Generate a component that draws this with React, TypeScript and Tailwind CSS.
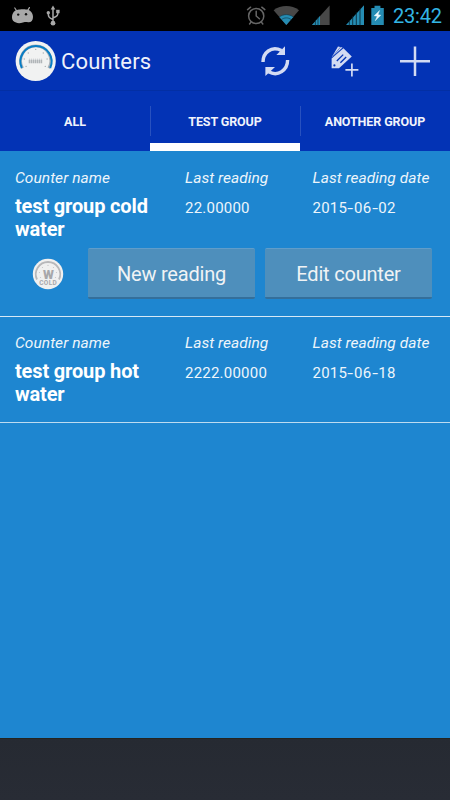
import React from "react";

function StatusBar() {
  return (
    <div className="flex h-[31px] shrink-0 items-start bg-black">
      <svg className="h-[31px] w-[230px] shrink-0" viewBox="0 0 230 31">
        <g fill="#a8a8a8">
          <path d="M12 17.5C12 12.5 15 9.7 18 9.7C20 9 24.5 9 26.5 9.6C30.5 10.2 33 13 33 17C33 20.5 31 22.6 28 22.3C26.5 22 25.5 21.9 23 22.6C20 23.5 17.5 23.4 16 22.5C13.5 22 12 20 12 17.5Z" />
          <path d="M16.8 11L14.8 8M27.6 10.6L29.4 7.6" stroke="#a8a8a8" strokeWidth="1.2" strokeLinecap="round" />
        </g>
        <circle cx="18.2" cy="14.6" r="1.2" fill="#111" />
        <circle cx="26" cy="14.3" r="1.2" fill="#111" />
        <g fill="none" stroke="#a8a8a8" strokeWidth="1.5">
          <path d="M53 8V22M53 19.5C48.5 17.5 48.3 16.5 48.3 13M53 18C57.6 16 58 15.5 58 11.5" />
        </g>
        <g fill="#a8a8a8">
          <path d="M53 5.6L55.3 9.4H50.7Z" />
          <circle cx="53" cy="23.2" r="2.4" />
          <circle cx="48.3" cy="12.7" r="1.7" />
          <rect x="56.2" y="9.8" width="3.4" height="3.4" />
        </g>
      </svg>
      <svg className="ml-[10px] h-[31px] w-[148px] shrink-0" viewBox="240 0 148 31">
        <g fill="none" stroke="#666" strokeWidth="1.5" strokeLinecap="round">
          <circle cx="256.2" cy="16" r="7.6" />
          <path d="M256.2 11.2V16L259.4 18.8M247.6 9.6L250.6 7.2M264.8 9.6L261.8 7.2M250.8 22.4L249.6 24M261.6 22.4L262.8 24" />
        </g>
        <path d="M286.3 25L273.6 10.2C281 4.6 291.6 4.6 299 10.2Z" fill="#484848" />
        <path d="M286.3 25L279.3 16.9C283.4 13.9 289.2 13.9 293.3 16.9Z" fill="#258cb3" />
        <path d="M279.2 17C283.4 13.8 289.2 13.8 293.4 17M281.4 19.6C284.4 17.3 288.2 17.3 291.2 19.6" fill="none" stroke="#123f51" strokeWidth=".7" />
        <path d="M312 25L329.6 5.5V25Z" fill="#484848" />
        <path d="M312 25L320 16.1V25Z" fill="#258cb3" />
        <path d="M315.4 20V25.5M318 17.5V25.5" stroke="#082632" strokeWidth=".7" />
        <path d="M346 25L364 5.2V25Z" fill="#258cb3" />
        <path d="M349.3 20V25.5M352.7 16V25.5M356.3 12V25.5M360 8V25.5" stroke="#06202b" strokeWidth=".8" />
        <path d="M371.3 8H374.5V5.7H380.4V8H383.8V25H371.3Z" fill="#258cb3" />
        <path d="M379.6 10.5L374.2 15.8L377.2 16.3L375.2 20.8L380.8 15.2L378 14.6Z" fill="#eef8fc" stroke="#eef8fc" strokeWidth=".4" />
      </svg>
      <span className="ml-[5px] text-[20px] leading-[32px] font-normal text-[#33b5e5] tracking-[-0.2px]">23:42</span>
    </div>
  );
}

function AppLogo() {
  return (
    <svg className="h-[42px] w-[42px] shrink-0" viewBox="0 0 42 42">
      <circle cx="21.7" cy="21" r="20.1" fill="#f1f2f2" />
      <path d="M8.6 28.2A15 15 0 1 1 34.8 28.2" fill="none" stroke="#a8b2ba" strokeWidth="2.8" />
      <path d="M7.8 28A15.6 15.6 0 1 1 36.2 28" fill="none" stroke="#087dc5" strokeWidth="2" />
      <g fill="#aab0b4">
        <circle cx="21.7" cy="9.4" r=".7" /><circle cx="14.3" cy="13" r=".7" /><circle cx="29.3" cy="13" r=".7" />
        <circle cx="10.3" cy="19" r=".7" /><circle cx="33.1" cy="19" r=".7" />
        <circle cx="12.1" cy="26.4" r=".7" /><circle cx="31.3" cy="26.4" r=".7" />
      </g>
      <path d="M14.7 21.5H28.7" stroke="#b0b5b8" strokeWidth="3.4" strokeDasharray="1.5 .5" />
      <path d="M15.1 19.2H28.3" stroke="#c3c7ca" strokeWidth="1" strokeDasharray="1 1" />
    </svg>
  );
}

function ActionBar() {
  return (
    <header className="flex h-[60px] shrink-0 items-center border-b border-[#032fa4] bg-[#0333b5] pl-[14px]">
      <AppLogo />
      <h1 className="ml-[5px] w-[179px] pt-[2px] text-[22px] leading-[30px] font-normal tracking-[0.2px] text-[#eef1fb]">Counters</h1>
      <svg className="h-[60px] w-[210px] shrink-0" viewBox="240 31 210 60">
        <g fill="none" stroke="#d3dbf3" strokeWidth="3.4">
          <path d="M263 62C263 53 271 45.5 281.5 50.5" />
          <path d="M287.6 60C287.6 70 278 77 268.7 71.8" />
        </g>
        <path d="M285 46.2V55H276.4Z" fill="#d3dbf3" />
        <path d="M265.4 67H275L265.4 76Z" fill="#d3dbf3" />
        <g fill="#d3dbf3">
          <path d="M331.6 58.6L343.4 48.2L351.8 56.6L339 68.2H331.6Z" />
          <path d="M331.6 57.4L338 46.4L342.6 47.4Z" />
        </g>
        <path d="M332.6 56.6L340.6 47" stroke="#0333b5" strokeWidth=".5" />
        <path d="M336.8 61L343.2 54.6M340.4 62.8L346.2 57" stroke="#0333b5" strokeWidth="1.3" />
        <circle cx="334.4" cy="65.4" r="1.1" fill="#0333b5" />
        <path d="M351.9 63.4V76.4M345.4 69.9H358.4" stroke="#d3dbf3" strokeWidth="1.7" />
        <path d="M415 46.5V76M400 61.3H430" stroke="#d3dbf3" strokeWidth="2.5" />
      </svg>
    </header>
  );
}

function Tabs() {
  return (
    <nav className="grid h-[60px] shrink-0 grid-cols-3 bg-[#0333b5] text-[12.5px] leading-[18px] font-bold text-[#f0f3fc]">
      <div className="relative h-[60px] pt-[22px] text-center">
        ALL
        <span className="absolute top-[15px] -right-px h-[30px] w-px bg-[#2851bf]" />
      </div>
      <div className="relative h-[60px] border-b-8 border-white pt-[22px] text-center tracking-[-0.1px]">
        TEST GROUP
        <span className="absolute top-[15px] -right-px h-[30px] w-px bg-[#2851bf]" />
      </div>
      <div className="h-[60px] pt-[22px] text-center tracking-[-0.1px]">ANOTHER GROUP</div>
    </nav>
  );
}

function CounterFields({ name, reading, date }: { name: string; reading: string; date: string }) {
  return (
    <div className="grid grid-cols-[170px_127.5px_1fr] pl-[15px] text-[15px] leading-[18px] tracking-[0.22px] text-[#edf5fb]">
      <div>
        <div className="text-[15.5px] tracking-[0.05px] italic">Counter name</div>
        <div className="mt-[8px] w-[150px] text-[20px] leading-[23px] font-bold tracking-[-0.15px] text-white">{name}</div>
      </div>
      <div>
        <div className="text-[15.5px] tracking-[0.05px] italic">Last reading</div>
        <div className="mt-[12px]">{reading}</div>
      </div>
      <div>
        <div className="text-[15.5px] tracking-[0.05px] whitespace-nowrap italic">Last reading date</div>
        <div className="mt-[12px]">
          {date.split("-").map((part, i) => (
            <React.Fragment key={i}>
              {i > 0 && <span className="mx-[1.3px] inline-block scale-x-140">-</span>}
              {part}
            </React.Fragment>
          ))}
        </div>
      </div>
    </div>
  );
}

function ColdWaterBadge() {
  return (
    <svg className="h-[32px] w-[32px] shrink-0" viewBox="0 0 32 32">
      <circle cx="16" cy="16" r="15.2" fill="#f0f0f0" />
      <path d="M5 21.5A12.2 12.2 0 1 1 27 21.5" fill="none" stroke="#b8b8ba" strokeWidth="1.8" />
      <g fill="#c4c4c6">
        <circle cx="16" cy="7.4" r=".6" /><circle cx="10.5" cy="9.5" r=".6" /><circle cx="21.5" cy="9.5" r=".6" />
        <circle cx="7.5" cy="14.5" r=".6" /><circle cx="24.5" cy="14.5" r=".6" /><circle cx="8.5" cy="19.5" r=".6" /><circle cx="23.5" cy="19.5" r=".6" />
      </g>
      <text x="16.4" y="20.6" textAnchor="middle" fontSize="12.5" fontWeight="900" fill="#a7a7aa" fontFamily="Roboto, sans-serif">W</text>
      <text x="16" y="27.2" textAnchor="middle" fontSize="6.5" fontWeight="700" fill="#a7a7aa" fontFamily="Roboto, sans-serif" textLength="17.5">COLD</text>
    </svg>
  );
}

function Button({ children }: { children: React.ReactNode }) {
  return (
    <button className="h-[51px] w-[167px] rounded-[2px] border-t border-b-2 border-t-[#609dca] border-b-[#346f9b] bg-[#4e8fbc] pt-[3px] text-[20px] leading-[45px] tracking-[-0.2px] text-[#f0f3f5]">
      {children}
    </button>
  );
}

export default function App() {
  return (
    <div className="flex h-[800px] w-[450px] flex-col overflow-hidden bg-[#1e86d0] font-['Roboto',sans-serif]">
      <StatusBar />
      <ActionBar />
      <Tabs />
      <main className="flex-1">
        <section className="h-[166px] border-b border-[#d7e9f6] pt-[18px]">
          <CounterFields name="test group cold water" reading="22.00000" date="2015-06-02" />
          <div className="mt-[7px] flex items-center pl-[32px]">
            <ColdWaterBadge />
            <div className="ml-[24px] flex gap-[10px]">
              <Button>New reading</Button>
              <Button>Edit counter</Button>
            </div>
          </div>
        </section>
        <section className="h-[106px] border-b border-[#bddbf0] pt-[17px]">
          <CounterFields name="test group hot water" reading="2222.00000" date="2015-06-18" />
        </section>
      </main>
      <footer className="h-[62px] shrink-0 border-t border-[#24241f] bg-linear-to-b from-[#262a32] to-[#282c35]" />
    </div>
  );
}
